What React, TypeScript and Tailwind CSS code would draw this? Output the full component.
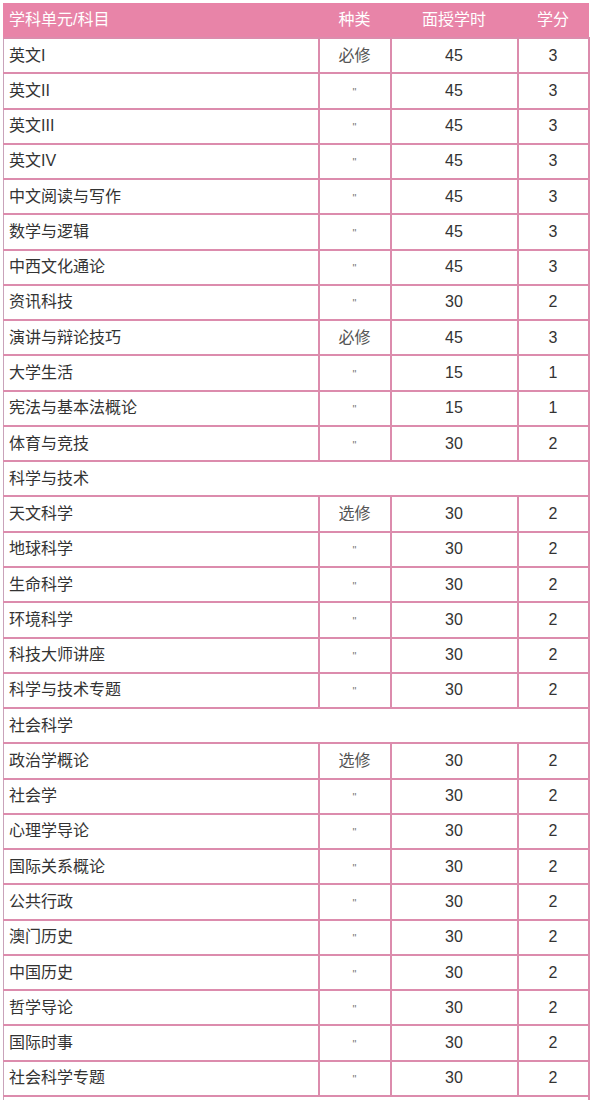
import React from "react";

type Row = { name: string; kind?: string; hours?: string; credit?: string; section?: boolean };

const rows: Row[] = [
  { name: "英文I", kind: "必修", hours: "45", credit: "3" },
  { name: "英文II", kind: "\"", hours: "45", credit: "3" },
  { name: "英文III", kind: "\"", hours: "45", credit: "3" },
  { name: "英文IV", kind: "\"", hours: "45", credit: "3" },
  { name: "中文阅读与写作", kind: "\"", hours: "45", credit: "3" },
  { name: "数学与逻辑", kind: "\"", hours: "45", credit: "3" },
  { name: "中西文化通论", kind: "\"", hours: "45", credit: "3" },
  { name: "资讯科技", kind: "\"", hours: "30", credit: "2" },
  { name: "演讲与辩论技巧", kind: "必修", hours: "45", credit: "3" },
  { name: "大学生活", kind: "\"", hours: "15", credit: "1" },
  { name: "宪法与基本法概论", kind: "\"", hours: "15", credit: "1" },
  { name: "体育与竞技", kind: "\"", hours: "30", credit: "2" },
  { name: "科学与技术", section: true },
  { name: "天文科学", kind: "选修", hours: "30", credit: "2" },
  { name: "地球科学", kind: "\"", hours: "30", credit: "2" },
  { name: "生命科学", kind: "\"", hours: "30", credit: "2" },
  { name: "环境科学", kind: "\"", hours: "30", credit: "2" },
  { name: "科技大师讲座", kind: "\"", hours: "30", credit: "2" },
  { name: "科学与技术专题", kind: "\"", hours: "30", credit: "2" },
  { name: "社会科学", section: true },
  { name: "政治学概论", kind: "选修", hours: "30", credit: "2" },
  { name: "社会学", kind: "\"", hours: "30", credit: "2" },
  { name: "心理学导论", kind: "\"", hours: "30", credit: "2" },
  { name: "国际关系概论", kind: "\"", hours: "30", credit: "2" },
  { name: "公共行政", kind: "\"", hours: "30", credit: "2" },
  { name: "澳门历史", kind: "\"", hours: "30", credit: "2" },
  { name: "中国历史", kind: "\"", hours: "30", credit: "2" },
  { name: "哲学导论", kind: "\"", hours: "30", credit: "2" },
  { name: "国际时事", kind: "\"", hours: "30", credit: "2" },
  { name: "社会科学专题", kind: "\"", hours: "30", credit: "2" },
  { name: "", section: true },
];

const cell = "border-2 border-[#dc8cad] h-[35.28px] p-0";

export default function App() {
  return (
    <div
      className="bg-white pl-[3px] pt-[3px] h-[1100px] overflow-hidden"
      style={{ fontFamily: '"Liberation Sans", "Noto Sans CJK SC", sans-serif' }}
    >
      <table className="w-[585px] border-collapse table-fixed text-[16px] text-[#333]">
        <colgroup>
          <col className="w-[315px]" />
          <col className="w-[72px]" />
          <col className="w-[127px]" />
          <col className="w-[71px]" />
        </colgroup>
        <thead>
          <tr className="bg-[#e884a8] text-white h-[35px]">
            <th className="text-left font-normal pl-[5px] border-l border-[#e884a8]">学科单元/科目</th>
            <th className="font-normal">种类</th>
            <th className="font-normal">面授学时</th>
            <th className="font-normal">学分</th>
          </tr>
        </thead>
        <tbody>
          {rows.map((r, i) =>
            r.section ? (
              <tr key={i}>
                <td colSpan={4} className={`${cell} border-l border-l-[#c9a3ba] pl-[5px]`}>
                  {r.name}
                </td>
              </tr>
            ) : (
              <tr key={i}>
                <td className={`${cell} border-l border-l-[#c9a3ba] pl-[5px]`}>{r.name}</td>
                <td className={`${cell} text-center text-[#555]`}>
                  {r.kind === "\"" ? <span className="text-[11px] text-[#777]">"</span> : r.kind}
                </td>
                <td className={`${cell} text-center`}>{r.hours}</td>
                <td className={`${cell} text-center`}>{r.credit}</td>
              </tr>
            )
          )}
        </tbody>
      </table>
    </div>
  );
}
